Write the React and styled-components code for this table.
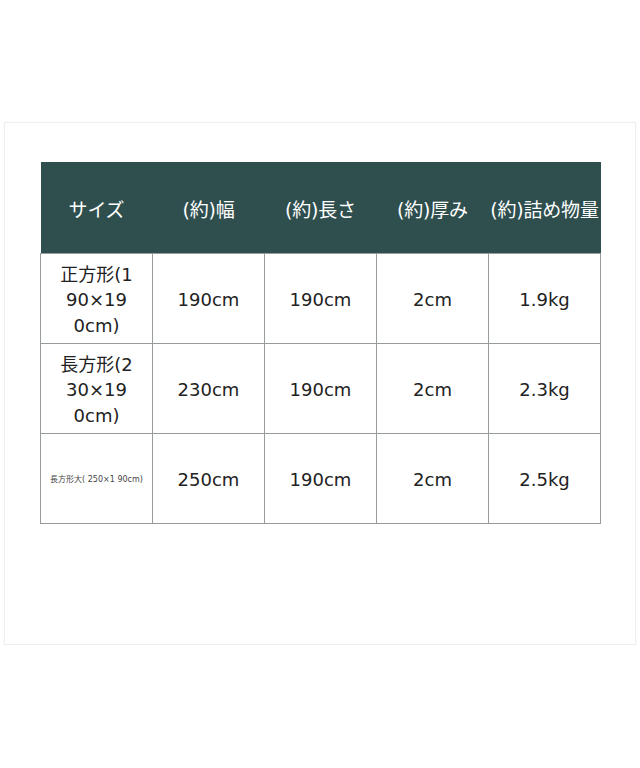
import React from 'react';
import styled, { createGlobalStyle } from 'styled-components';

const GlobalStyle = createGlobalStyle`
  body {
    margin: 0;
    background: #fff;
    font-family: "DejaVu Sans", "Noto Sans CJK JP", sans-serif;
  }
`;

const Frame = styled.div`
  margin: 122px 4px 0 4px;
  height: 523px;
  border: 1px solid #eeeeee;
  box-shadow: 0 0 2px rgba(0, 0, 0, 0.04);
  box-sizing: border-box;
  padding: 39px 0 0 35px;
`;

const Table = styled.table`
  width: 561px;
  border-collapse: collapse;
  table-layout: fixed;
  color: #222;
`;

const HeadCell = styled.th`
  height: 89px;
  padding: 2px 0 0;
  background: #2f4f4f;
  color: #fff;
  font-size: 19px;
  font-weight: normal;
  text-align: center;
  white-space: nowrap;
  letter-spacing: -0.2px;
`;

const Cell = styled.td`
  height: 86px;
  padding: 3px 0 0;
  border: 1px solid #959c9b;
  text-align: center;
  vertical-align: middle;
  font-size: ${({ $small }) => ($small ? '8px' : '18px')};
  line-height: ${({ $small }) => ($small ? '12px' : '25.5px')};
  color: ${({ $small }) => ($small ? '#444' : '#222')};
`;

const headers = ['サイズ', '(約)幅', '(約)長さ', '(約)厚み', '(約)詰め物量'];

const rows = [
  { size: ['正方形(1', '90×19', '0cm)'], width: '190cm', length: '190cm', thick: '2cm', fill: '1.9kg' },
  { size: ['長方形(2', '30×19', '0cm)'], width: '230cm', length: '190cm', thick: '2cm', fill: '2.3kg' },
  { size: ['長方形大( 250×1 90cm)'], small: true, width: '250cm', length: '190cm', thick: '2cm', fill: '2.5kg' },
];

const App = () => (
  <>
    <GlobalStyle />
    <Frame>
      <Table>
        <thead>
          <tr>
            {headers.map((h) => (
              <HeadCell key={h}>{h}</HeadCell>
            ))}
          </tr>
        </thead>
        <tbody>
          {rows.map((r, i) => (
            <tr key={i}>
              <Cell $small={r.small}>
                {r.size.map((line, j) => (
                  <React.Fragment key={j}>
                    {j > 0 && <br />}
                    {line}
                  </React.Fragment>
                ))}
              </Cell>
              <Cell>{r.width}</Cell>
              <Cell>{r.length}</Cell>
              <Cell>{r.thick}</Cell>
              <Cell>{r.fill}</Cell>
            </tr>
          ))}
        </tbody>
      </Table>
    </Frame>
  </>
);

export default App;
